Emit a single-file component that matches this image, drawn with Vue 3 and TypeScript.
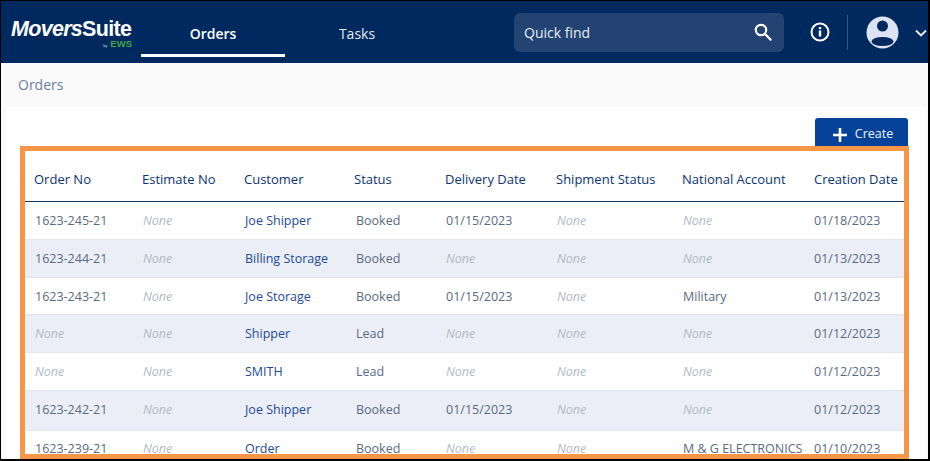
<script setup lang="ts">
interface Row { order: string; estimate: string; customer: string; status: string; delivery: string; shipment: string; account: string; created: string }
const columns = ['Order No', 'Estimate No', 'Customer', 'Status', 'Delivery Date', 'Shipment Status', 'National Account', 'Creation Date']
const rows: Row[] = [
  { order: '1623-245-21', estimate: '', customer: 'Joe Shipper', status: 'Booked', delivery: '01/15/2023', shipment: '', account: '', created: '01/18/2023' },
  { order: '1623-244-21', estimate: '', customer: 'Billing Storage', status: 'Booked', delivery: '', shipment: '', account: '', created: '01/13/2023' },
  { order: '1623-243-21', estimate: '', customer: 'Joe Storage', status: 'Booked', delivery: '01/15/2023', shipment: '', account: 'Military', created: '01/13/2023' },
  { order: '', estimate: '', customer: 'Shipper', status: 'Lead', delivery: '', shipment: '', account: '', created: '01/12/2023' },
  { order: '', estimate: '', customer: 'SMITH', status: 'Lead', delivery: '', shipment: '', account: '', created: '01/12/2023' },
  { order: '1623-242-21', estimate: '', customer: 'Joe Shipper', status: 'Booked', delivery: '01/15/2023', shipment: '', account: '', created: '01/12/2023' },
  { order: '1623-239-21', estimate: '', customer: 'Order', status: 'Booked', delivery: '', shipment: '', account: 'M & G ELECTRONICS', created: '01/10/2023' }
]
const plain: (keyof Row)[] = ['status', 'delivery', 'shipment', 'account', 'created']
</script>

<template>
  <div class="frame">
    <header class="topbar">
      <div class="logo">
        <span class="logo-name"><em>Movers</em>Suite</span>
        <span class="logo-by"><small>by</small>EWS</span>
      </div>
      <nav class="tabs">
        <a class="tab active">Orders</a>
        <a class="tab">Tasks</a>
      </nav>
      <div class="search">
        <span>Quick find</span>
        <svg width="20" height="20" viewBox="0 0 20 20" fill="none" stroke="#fff" stroke-width="2.2">
          <circle cx="8" cy="8" r="5.2" />
          <path d="M12 12l5.6 5.6" stroke-linecap="round" />
        </svg>
      </div>
      <svg class="info" width="20" height="20" viewBox="0 0 20 20">
        <circle cx="10" cy="10" r="8.5" fill="none" stroke="#fff" stroke-width="2" />
        <rect x="8.800" y="8.500" width="2.400" height="6" fill="#fff" />
        <rect x="8.800" y="5" width="2.400" height="2.200" fill="#fff" />
      </svg>
      <div class="divider"></div>
      <svg class="avatar" width="33" height="33" viewBox="0 0 33 33">
        <circle cx="16.500" cy="16.500" r="16" fill="#dde3f2" />
        <circle cx="16.500" cy="10" r="5.500" fill="#002a5f" />
        <ellipse cx="16.500" cy="25.500" rx="11" ry="4.600" fill="#002a5f" />
      </svg>
      <svg class="chev" width="12" height="8" viewBox="0 0 12 8" fill="none" stroke="#f0f3f8" stroke-width="1.800">
        <path d="M1 1.500l5 5 5-5" />
      </svg>
    </header>

    <div class="crumb">Orders</div>

    <main class="content">
      <div class="actions">
        <button class="create">
          <svg width="14" height="14" viewBox="0 0 14 14"><path d="M5.700 0h2.600v5.700H14v2.600H8.300V14H5.700V8.300H0V5.700h5.700z" fill="#fff" /></svg>
          Create
        </button>
      </div>
      <div class="highlight">
        <table>
          <thead>
            <tr>
              <th v-for="c in columns" :key="c">{{ c }}</th>
            </tr>
          </thead>
          <tbody>
            <tr v-for="(r, i) in rows" :key="i">
              <td :class="{ none: !r.order }">{{ r.order || 'None' }}</td>
              <td class="none">None</td>
              <td class="link">{{ r.customer }}</td>
              <td v-for="k in plain" :key="k" :class="{ none: !r[k] }">{{ r[k] || 'None' }}</td>
            </tr>
          </tbody>
        </table>
      </div>
    </main>
  </div>
</template>

<style>
html, body { margin: 0; background: #fff; }
</style>

<style scoped>
.frame {
  box-sizing: border-box;
  width: 930px;
  height: 461px;
  border: solid #000;
  border-width: 1px 2px 2px 1px;
  overflow: hidden;
  font-family: "Open Sans", sans-serif;
  font-size: 13px;
  display: flex;
  flex-direction: column;
  background: #fafafa;
}
.topbar {
  height: 62px;
  flex: none;
  background: #002a5f;
  display: flex;
  align-items: center;
}
.logo {
  width: 140px;
  flex: none;
  padding-left: 10px;
  padding-top: 4px;
  box-sizing: border-box;
  display: flex;
  flex-direction: column;
  color: #fff;
}
.logo-name {
  font-family: "Liberation Sans", Arial, sans-serif;
  font-weight: 700;
  font-size: 21.500px;
  line-height: 22px;
  letter-spacing: -0.700px;
  white-space: nowrap;
}
.logo-name em { font-style: italic; }
.logo-by {
  align-self: flex-end;
  margin-right: 9px;
  font-family: "Liberation Sans", Arial, sans-serif;
  font-size: 9.500px;
  line-height: 8px;
  font-weight: 700;
  color: #3fa64a;
}
.logo-by small { font-size: 4px; color: #c7d3e3; font-weight: 400; margin-right: 3px; }
.tabs { display: flex; height: 100%; }
.tab {
  width: 144px;
  box-sizing: border-box;
  height: 56px;
  display: flex;
  align-items: center;
  justify-content: center;
  padding-top: 8px;
  color: #e4ebf4;
  font-size: 14px;
}
.tab.active {
  color: #fff;
  font-weight: 600;
  border-bottom: 3px solid #fff;
  padding-top: 11px;
}
.search {
  margin-left: 85px;
  width: 270px;
  height: 39px;
  box-sizing: border-box;
  background: #234472;
  border-radius: 6px;
  color: #e9eef6;
  font-size: 14px;
  padding: 0 11px 0 10px;
  display: flex;
  align-items: center;
  justify-content: space-between;
}
.info { margin-left: 26px; flex: none; }
.divider { width: 1px; height: 35px; background: #34557f; margin-left: 17px; flex: none; }
.avatar { margin-left: 18px; flex: none; }
.chev { margin-left: 16px; flex: none; margin-top: 2px; }
.crumb {
  height: 44px;
  flex: none;
  box-sizing: border-box;
  background: #fafafa;
  color: #6a7f9c;
  font-size: 14px;
  padding: 12px 0 0 17px;
}
.content {
  flex: 1;
  min-height: 0;
  margin: 0 2px 0 5px;
  display: flex;
  flex-direction: column;
  background: #fff;
}
.actions {
  height: 28px;
  flex: none;
  padding-top: 11px;
  padding-right: 18px;
  display: flex;
  justify-content: flex-end;
}
.create {
  width: 93px;
  height: 32px;
  box-sizing: border-box;
  background: #06429a;
  border: 0;
  border-radius: 3px 3px 0 0;
  color: #f1f4fa;
  font-family: inherit;
  font-size: 12.500px;
  display: flex;
  align-items: flex-start;
  justify-content: center;
  gap: 8px;
  padding: 7px 0 0 3px;
}
.create svg { margin-top: 3px; }
.highlight {
  position: relative;
  margin: 0 17px 0 14px;
  border: 5px solid #f79646;
  flex: 1;
  min-height: 0;
  overflow: hidden;
  background: #fff;
}
table {
  width: 879px;
  border-collapse: collapse;
  table-layout: fixed;
  font-size: 12.500px;
  color: #5a6a84;
}
th {
  height: 50px;
  box-sizing: border-box;
  text-align: left;
  font-weight: 400;
  font-size: 13px;
  color: #0a3472;
  border-bottom: 1.500px solid #14386f;
  padding: 6px 0 0 9px;
  white-space: nowrap;
}
td {
  height: 38px;
  box-sizing: border-box;
  padding: 0 0 0 10px;
  border-bottom: 1px solid #e0e5ee;
  white-space: nowrap;
}
tbody tr:nth-child(even) td { background: #ebeef6; }
tbody tr:nth-child(3) td { height: 37px; padding-top: 2px; }
tbody tr:nth-child(6) td { height: 40px; padding-bottom: 2px; }
tbody tr:nth-child(7) td { padding-bottom: 2px; }
td:nth-child(4) { padding-left: 11px; }
td:last-child { padding-left: 9px; }
th:nth-child(1) { width: 108px; }
th:nth-child(2) { width: 102px; }
th:nth-child(3) { width: 110px; }
th:nth-child(4) { width: 91px; }
th:nth-child(5) { width: 111px; }
th:nth-child(6) { width: 126px; }
th:nth-child(7) { width: 132px; }
.none { color: #b3b9c6; font-style: italic; }
.link { color: #1c4a97; }
</style>
